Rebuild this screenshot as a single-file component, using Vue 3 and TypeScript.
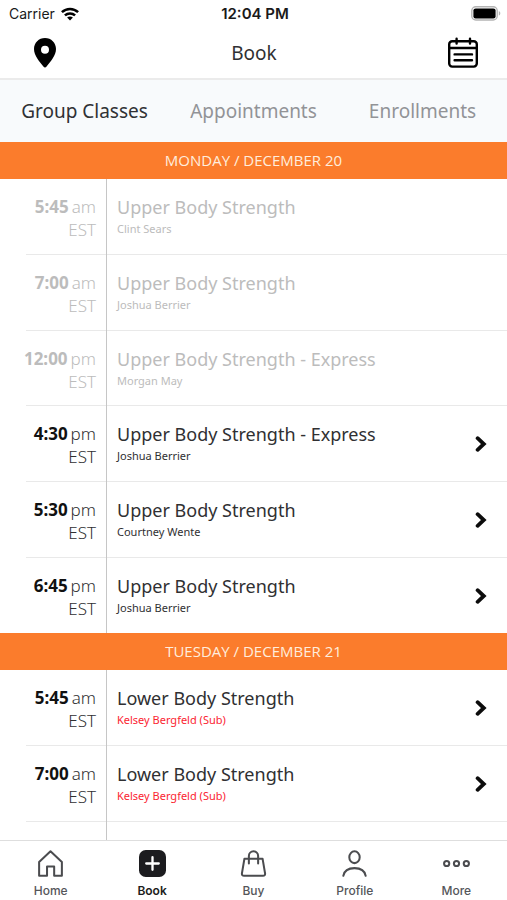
<script setup lang="ts">
import { ref } from 'vue'

interface ClassItem {
  time: string
  period: string
  title: string
  coach: string
  past?: boolean
  sub?: boolean
}

interface Day {
  label: string
  classes: ClassItem[]
}

const tabs = ['Group Classes', 'Appointments', 'Enrollments']
const activeTab = ref('Group Classes')

const days: Day[] = [
  {
    label: 'MONDAY / DECEMBER 20',
    classes: [
      { time: '5:45', period: 'am', title: 'Upper Body Strength', coach: 'Clint Sears', past: true },
      { time: '7:00', period: 'am', title: 'Upper Body Strength', coach: 'Joshua Berrier', past: true },
      { time: '12:00', period: 'pm', title: 'Upper Body Strength - Express', coach: 'Morgan May', past: true },
      { time: '4:30', period: 'pm', title: 'Upper Body Strength - Express', coach: 'Joshua Berrier' },
      { time: '5:30', period: 'pm', title: 'Upper Body Strength', coach: 'Courtney Wente' },
      { time: '6:45', period: 'pm', title: 'Upper Body Strength', coach: 'Joshua Berrier' },
    ],
  },
  {
    label: 'TUESDAY / DECEMBER 21',
    classes: [
      { time: '5:45', period: 'am', title: 'Lower Body Strength', coach: 'Kelsey Bergfeld (Sub)', sub: true },
      { time: '7:00', period: 'am', title: 'Lower Body Strength', coach: 'Kelsey Bergfeld (Sub)', sub: true },
    ],
  },
]

const navItems = ['Home', 'Book', 'Buy', 'Profile', 'More']
const activeNav = ref('Book')
</script>

<template>
  <div class="app">
    <div class="status">
      <div class="carrier">
        <span>Carrier</span>
        <svg width="18" height="14" viewBox="0 0 18 14" fill="none" stroke="#000" stroke-width="2.5">
          <path d="M.9 5.200C5.500 .8 12.500 .8 17.100 5.200" />
          <path d="M3.900 8.400C6.800 5.700 11.200 5.700 14.100 8.400" />
          <path d="M6.100 10.500C7.800 9.100 10.200 9.100 11.900 10.500L9 13.500Z" fill="#000" stroke="none" />
        </svg>
      </div>
      <span class="clock">12:04 PM</span>
      <svg class="battery" width="30" height="15" viewBox="0 0 30 15">
        <rect x=".8" y=".8" width="25.400" height="13.200" rx="4" fill="#fff" stroke="#b4b4b4" stroke-width="1.400" />
        <rect x="2.400" y="2.400" width="22.200" height="10" rx="2.200" fill="#000" />
        <path d="M27.800 5v4.600c2-.8 2-3.800 0-4.600Z" fill="#b4b4b4" />
      </svg>
    </div>

    <header class="header">
      <button class="icon-button" aria-label="Location">
        <svg width="24" height="32" viewBox="0 0 24 32">
          <path fill-rule="evenodd" d="M12 1C5.800 1 1 5.800 1 12c0 6.500 5.300 12.300 9.400 17.600q1.600 2 3.200 0C17.700 24.300 23 18.500 23 12 23 5.800 18.200 1 12 1Zm0 7.800a4 4 0 1 1 0 8 4 4 0 0 1 0-8Z" />
        </svg>
      </button>
      <h1>Book</h1>
      <button class="icon-button" aria-label="Calendar">
        <svg width="32" height="32" viewBox="0 0 32 32" fill="none" stroke="#000" stroke-width="2.400" stroke-linecap="round">
          <rect x="2.200" y="4.200" width="27.600" height="25.400" rx="3" />
          <path d="M2.200 11h27.600M9.600 1.800v4.800M23 1.800v4.800M7.600 17.400h17.400M7.600 23.200h17.400" />
        </svg>
      </button>
    </header>

    <div class="tabs" role="tablist">
      <button
        v-for="tab in tabs"
        :key="tab"
        role="tab"
        :aria-selected="tab === activeTab"
        :class="['tab', { active: tab === activeTab }]"
        @click="activeTab = tab"
      >{{ tab }}</button>
    </div>

    <main class="schedule">
      <section v-for="day in days" :key="day.label" class="day">
        <h2>{{ day.label }}</h2>
        <ul>
          <li v-for="item in day.classes" :key="item.time + item.period">
            <button :class="['row', { past: item.past }]" :disabled="item.past">
              <span class="when">
                <span><b>{{ item.time }}</b><span class="period">{{ item.period }}</span></span>
                <span>EST</span>
              </span>
              <span class="what">
                <span class="title">{{ item.title }}</span>
                <span :class="['coach', { sub: item.sub }]">{{ item.coach }}</span>
              </span>
              <svg v-if="!item.past" class="chevron" width="12" height="16" viewBox="0 0 12 16" fill="none" stroke="#0c0c0c" stroke-width="3.800">
                <path d="M2.600 2.200 8.800 8 2.600 13.800" stroke-linecap="round" />
              </svg>
            </button>
          </li>
        </ul>
      </section>
      <div class="rest"></div>
    </main>

    <nav class="bottom">
      <a
        v-for="name in navItems"
        :key="name"
        href="#"
        :class="{ active: name === activeNav }"
        @click.prevent="activeNav = name"
      >
        <svg width="27" height="27" viewBox="0 0 28 28" fill="none" stroke="#4b4c4f" stroke-width="2.100">
          <path v-if="name === 'Home'" d="M2.200 12.500 14 1.400l11.800 11.100V26.800H17.800V17.200H10.400V26.800H2.200Z" stroke-linejoin="round" />
          <g v-else-if="name === 'Book'" stroke="none">
            <rect width="28" height="28" rx="7" fill="#1c1c1f" />
            <path d="M14 7.500v13M7.500 14h13" stroke="#fff" stroke-width="2.400" stroke-linecap="round" />
          </g>
          <g v-else-if="name === 'Buy'" stroke-linejoin="round" stroke-linecap="round">
            <path d="M4.600 9H23.400L26 24.200Q26.300 26.800 23.800 26.800H4.200Q1.700 26.800 2 24.200Z" />
            <path d="M9.200 14V6.200a4.800 4.800 0 0 1 9.600 0V14" />
          </g>
          <g v-else-if="name === 'Profile'" stroke-linecap="round">
            <ellipse cx="14" cy="7.500" rx="5.400" ry="6.100" />
            <path d="M2.400 26.800C3.400 21.500 7 18.800 14 18.800s10.600 2.700 11.600 8" />
          </g>
          <g v-else>
            <circle cx="3.800" cy="14" r="2.700" />
            <circle cx="14" cy="14" r="2.700" />
            <circle cx="24.200" cy="14" r="2.700" />
          </g>
        </svg>
        <span>{{ name }}</span>
      </a>
    </nav>
  </div>
</template>

<style>
body {
  margin: 0;
  background: #fff;
}
</style>

<style scoped>
.app {
  display: flex;
  flex-direction: column;
  height: 100vh;
  font-family: "Noto Sans", "Open Sans", sans-serif;
  color: #303032;
}

button {
  margin: 0;
  padding: 0;
  border: 0;
  background: none;
  color: inherit;
  font: inherit;
  text-align: left;
}

svg {
  display: block;
  flex: none;
}

.status {
  display: grid;
  grid-template-columns: 1fr auto 1fr;
  align-items: center;
  height: 27px;
  padding: 0 6px 0 9px;
  font-family: Inter, Roboto, sans-serif;
  font-size: 14px;
  color: #1a1a1a;
}

.carrier {
  display: flex;
  align-items: center;
  gap: 6px;
}

.clock {
  font-size: 15px;
  font-weight: 600;
}

.battery {
  justify-self: end;
}

.header {
  display: flex;
  align-items: center;
  justify-content: space-between;
  height: 51px;
  padding: 0 28px 0 29px;
  border-bottom: 2px solid #ebebeb;
}

.icon-button {
  display: flex;
  justify-content: center;
  width: 32px;
}

h1 {
  margin: 0;
  font-size: 19px;
  font-weight: 400;
}

.tabs {
  display: grid;
  grid-template-columns: repeat(3, 1fr);
  align-items: center;
  height: 62px;
  background: #f8fafc;
}

.tab {
  font-size: 19px;
  color: #929397;
  text-align: center;
}

.tab.active {
  color: #303134;
}

.schedule {
  display: flex;
  flex: 1;
  flex-direction: column;
  min-height: 0;
  overflow-y: auto;
}

h2 {
  margin: 0;
  background: #fb7c2c;
  color: #ffeddd;
  font-family: "Open Sans", "Noto Sans", sans-serif;
  font-size: 15px;
  font-weight: 400;
  line-height: 37px;
  text-align: center;
}

ul {
  margin: 0;
  padding: 0 0 0 26px;
  list-style: none;
}

.row {
  display: flex;
  width: 100%;
  height: 76px;
  box-shadow: inset 0 -1px #e9e9e9;
}

li:nth-child(3n) .row {
  height: 75px;
}

.day:first-child li:last-child .row {
  box-shadow: none;
}

.when {
  display: flex;
  flex-direction: column;
  align-items: flex-end;
  box-sizing: border-box;
  width: 81px;
  padding: 16px 10px 0 0;
  border-right: 1px solid #c6c6c6;
  font-size: 17px;
  font-weight: 300;
  line-height: 23px;
  white-space: nowrap;
}

.when b {
  font-weight: 700;
  color: #111;
}

.period {
  margin-left: 3px;
}

.what {
  display: flex;
  flex: 1;
  flex-direction: column;
  padding: 16px 0 0 10px;
}

.title {
  font-size: 18px;
  line-height: 24px;
}

.coach {
  font-size: 11px;
  line-height: 20px;
}

.coach.sub {
  color: #fb2431;
}

.chevron {
  align-self: center;
  margin-right: 20px;
}

.past,
.past .when b {
  color: #bcbcbc;
}

.rest {
  flex: 1;
  margin-left: 26px;
  width: 80px;
  border-right: 1px solid #c6c6c6;
}

.bottom {
  display: grid;
  grid-template-columns: repeat(5, 1fr);
  height: 59px;
  border-top: 1px solid #dedede;
}

.bottom a {
  display: flex;
  flex-direction: column;
  align-items: center;
  gap: 6px;
  padding-top: 9px;
  color: #55565a;
  font-family: Inter, Roboto, sans-serif;
  font-size: 12px;
  font-weight: 500;
  line-height: 16px;
  text-decoration: none;
}

.bottom a.active {
  color: #1d1d20;
  font-weight: 600;
}
</style>
